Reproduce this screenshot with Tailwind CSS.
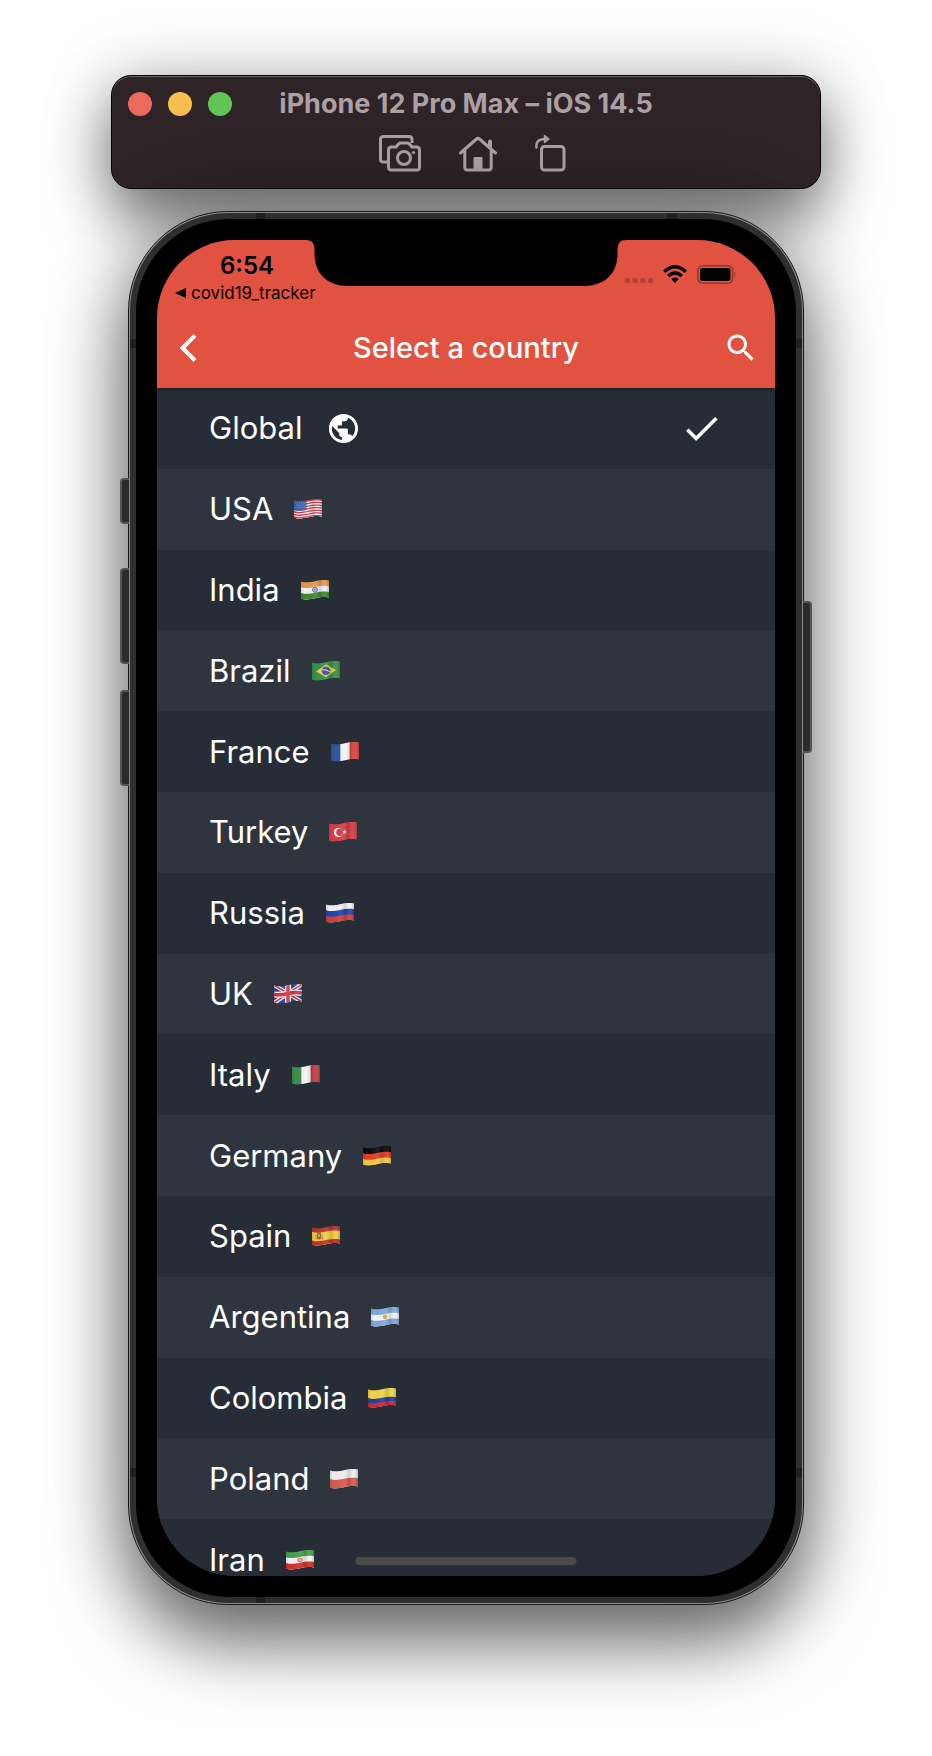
<!DOCTYPE html>
<html lang="en">
<head>
<meta charset="utf-8">
<meta name="viewport" content="width=device-width, initial-scale=1">
<title>Select a country</title>
<script src="https://cdn.jsdelivr.net/npm/@tailwindcss/browser@4"></script>
</head>
<body class="bg-white font-['Inter','Liberation_Sans',sans-serif]">
<!-- Shared flag pieces: waving outline and fabric shading -->
<svg class="absolute size-0" aria-hidden="true">
  <defs>
    <clipPath id="wave"><path d="M0 1.5c5 1.5 9 .8 14-.3s9-1.5 14-.6v17c-5-.9-9-.5-14 .6s-9 1.8-14 .5z"/></clipPath>
    <linearGradient id="shade"><stop offset="0" stop-color="#000" stop-opacity=".12"/><stop offset=".12" stop-color="#000" stop-opacity="0"/><stop offset=".5" stop-color="#fff" stop-opacity=".08"/><stop offset=".68" stop-color="#000" stop-opacity=".14"/><stop offset=".85" stop-color="#fff" stop-opacity=".06"/><stop offset="1" stop-color="#000" stop-opacity=".2"/></linearGradient>
  </defs>
</svg>
<main class="flex min-h-screen flex-col items-center gap-[22px] overflow-hidden px-4 pt-[75px] pb-[150px]">
  <header class="flex w-full max-w-[710px] flex-col rounded-[20px] border border-black bg-[#2e2327] px-4 pt-3 pb-4 shadow-[inset_0_1px_0_#6b6366,0_30px_60px_rgba(0,0,0,0.5),0_0_70px_rgba(0,0,0,0.2)]">
    <div class="grid grid-cols-[1fr_auto_1fr] items-center">
      <div class="flex gap-4">
        <button aria-label="Close" class="size-6 rounded-full bg-[#ed6a5f]"></button>
        <button aria-label="Minimize" class="size-6 rounded-full bg-[#f5be4f]"></button>
        <button aria-label="Zoom" class="size-6 rounded-full bg-[#61c454]"></button>
      </div>
      <h1 class="text-[27px] leading-8 font-bold whitespace-nowrap text-[#aca0a4]">iPhone 12 Pro Max – iOS 14.5</h1>
    </div>
    <div class="mt-[14px] ml-[247px] flex items-center gap-[30px] text-[#aca0a4]">
      <button aria-label="Screenshot" class="ml-1"><svg width="42" height="38" viewBox="0 0 42 38" fill="none" stroke="currentColor" stroke-width="3" stroke-linejoin="round"><path d="M8 28H4.500Q1.500 28 1.500 25V5.500Q1.500 2.500 4.500 2.500H30Q33 2.500 33 5.500V9"/><path d="M12.500 13H17l2.500-3Q20.500 9 22 9h6Q29.500 9 30.500 10L33 13h4.500Q40.500 13 40.500 16v17Q40.500 36 38 36H12.500Q9.500 36 9.500 33V16Q9.500 13 12.500 13Z"/><circle cx="25" cy="24" r="6.500"/><circle cx="34.500" cy="18.500" r="1.600" fill="currentColor" stroke="none"/></svg></button>
      <button aria-label="Home" class="ml-2"><svg width="38" height="38" viewBox="0 0 38 38" fill="none" stroke="currentColor" stroke-width="3" stroke-linecap="round" stroke-linejoin="round"><path d="M1.500 19L17.500 5Q19 3.800 20.500 5L36.500 19M5.800 17V33Q5.800 36 8.500 36h21Q32.200 36 32.200 33V17"/><path d="M31 13V7.500" stroke-width="4"/><path d="M15 35V23.500h8V35z" fill="currentColor" stroke-width="1"/></svg></button>
      <button aria-label="Rotate" class="ml-2"><svg width="31" height="38" viewBox="0 0 31 38" fill="none" stroke="currentColor" stroke-width="3" stroke-linecap="round"><rect x="6.500" y="12.500" width="22.500" height="23.500" rx="3"/><path d="M1.500 13.500Q.5 5 9.500 5" stroke-width="2.500"/><path d="M9.500 1.500v7l4.500-3.500z" fill="currentColor" stroke-width="1.500" stroke-linejoin="round"/></svg></button>
    </div>
  </header>

  <section class="relative w-full max-w-[676px] rounded-[100px] border border-[#161616] bg-[#8c8c8c] p-px shadow-[0_40px_70px_rgba(0,0,0,0.5),0_0_80px_rgba(0,0,0,0.3)]">
    <!-- Hardware buttons -->
    <div class="absolute top-[266px] -left-[9px] h-[46px] w-[9px] rounded-l-[4px] border-2 border-r-0 border-[#555] bg-[#2b2b2b]"></div>
    <div class="absolute top-[356px] -left-[9px] h-[96px] w-[9px] rounded-l-[4px] border-2 border-r-0 border-[#555] bg-[#2b2b2b]"></div>
    <div class="absolute top-[478px] -left-[9px] h-[96px] w-[9px] rounded-l-[4px] border-2 border-r-0 border-[#555] bg-[#2b2b2b]"></div>
    <div class="absolute top-[389px] -right-[9px] h-[152px] w-[9px] rounded-r-[4px] border-2 border-l-0 border-[#555] bg-[#2b2b2b]"></div>
    <div class="relative overflow-hidden rounded-[98px] bg-[#2f2f2f] p-[6px]">
      <!-- Antenna bands -->
      <div class="absolute inset-y-0 left-[126px] w-[9px] bg-[#1f1f1f]"></div>
      <div class="absolute top-0 right-[125px] h-3 w-[10px] bg-[#1f1f1f]"></div>
      <div class="absolute inset-x-0 top-[126px] h-[9px] bg-[#1f1f1f]"></div>
      <div class="absolute inset-x-0 bottom-[126px] h-[9px] bg-[#1f1f1f]"></div>
      <div class="relative rounded-[93px] bg-black p-[21px]">
        <div class="relative flex aspect-[618/1336] flex-col overflow-hidden rounded-[78px] bg-[#262d36]">
          <svg class="absolute top-0 left-1/2 z-10 -translate-x-1/2" width="320" height="47" viewBox="0 0 320 47"><path d="M0 0Q8.500 0 8.500 9V14C8.500 34 22 46 42 46H278C298 46 311.500 34 311.500 14V9Q311.500 0 320 0Z"/></svg>
          <div class="relative z-[1] shrink-0 bg-[#e15241] shadow-[0_1px_4px_rgba(0,0,0,0.35)]">
            <div class="flex h-[68px] justify-between pr-[39px] pl-[18px] text-black">
              <div class="pt-3">
                <div class="pl-[45px] text-[24px] leading-7 font-semibold">6:54</div>
                <a href="#" class="flex items-center gap-[5px] text-[17px] leading-[26px]"><svg width="11" height="10" viewBox="0 0 11 10"><path d="M0 5L11 0V10Z"/></svg>covid19_tracker</a>
              </div>
              <div class="flex items-start gap-[10px] pt-[25px]">
                <svg class="mt-[13px]" width="28" height="6" viewBox="0 0 28 6" fill="#b04236"><rect width="5" height="5" rx="1.500"/><rect x="7.700" width="5" height="5" rx="1.500"/><rect x="15.300" width="5" height="5" rx="1.500"/><rect x="23" width="5" height="5" rx="1.500"/></svg>
                <svg width="24" height="19" viewBox="0 0 24 19" fill="none" stroke="#000" stroke-width="3.400"><path d="M1.300 6.800Q12-3.200 22.700 6.800"/><path d="M5.200 11Q12 4.800 18.800 11"/><path d="M8.300 14Q12 11.200 15.700 14L12 18Z" fill="#000" stroke="none"/></svg>
                <svg width="39" height="19" viewBox="0 0 39 19"><rect x=".75" y=".75" width="35" height="17.500" rx="5" fill="none" stroke="#963629" stroke-width="1.500"/><rect x="3" y="3" width="30.500" height="13" rx="2.500"/><path d="M37.500 6.500Q39.500 9.500 37.500 12.500Z" fill="#963629"/></svg>
              </div>
            </div>
            <div class="grid h-20 grid-cols-[1fr_auto_1fr] items-center px-4 text-white">
              <button aria-label="Back" class="justify-self-start px-[6px]"><svg width="18" height="30" viewBox="0 0 18 30" fill="none" stroke="currentColor" stroke-width="4"><path d="M16 2.500L3.500 15L16 27.500"/></svg></button>
              <h2 class="text-[29px] leading-9 font-medium whitespace-nowrap">Select a country</h2>
              <button aria-label="Search" class="justify-self-end"><svg width="36" height="36" viewBox="0 0 24 24" fill="currentColor"><path d="M15.500 14h-.79l-.28-.27C15.410 12.590 16 11.110 16 9.500 16 5.910 13.090 3 9.500 3S3 5.910 3 9.500 5.910 16 9.500 16c1.610 0 3.090-.59 4.230-1.570l.27.28v.79l5 4.990L20.490 19l-4.990-5zm-6 0C7.010 14 5 11.990 5 9.500S7.010 5 9.500 5 14 7.010 14 9.500 11.990 14 9.500 14z"/></svg></button>
            </div>
          </div>
          <ul id="countries" class="grid h-[1212px] shrink-0 auto-rows-fr text-[31px] leading-10 text-white"></ul>
          <div class="absolute bottom-[11px] left-1/2 h-2 w-[221px] -translate-x-1/2 rounded-full bg-[#4b4a4b]"></div>
        </div>
      </div>
    </div>
  </section>
</main>
<script>
// A horizontal band starts at y and runs to the bottom edge, following the wave.
const band = (y, c) => `<path d="M0 ${y}c5 1.500 9 .8 14-.3s9-1.500 14-.6V22H0z" fill="${c}"/>`;
const bands = (...cs) => cs.map((c, i) => i ? band(1.5 + i * 17.2 / cs.length, c) : `<path d="M0 0h28v22H0z" fill="${c}"/>`).join('');
const columns = (...cs) => cs.map((c, i) => `<path d="M${i * 28 / 3} 0h10v22h-10z" fill="${c}"/>`).join('');
const flags = {
  USA: Array.from({length: 13}, (_, i) => band(i ? 1.5 + i * 1.32 : -2, i % 2 ? '#f4eeee' : '#c8394a')).join('') + '<path d="M0 0h12.500v11Q6 12.500 0 11.300z" fill="#3d62a5"/><path d="M1.500 4h10M2 6.200h10M1.500 8.400h10" stroke="#a9bbdb" stroke-width=".7" stroke-dasharray=".8 1"/>',
  India: bands('#e8984f', '#f2f1f1', '#3d8a2e') + '<circle cx="14" cy="9.800" r="2.500" fill="#b9bde0" stroke="#4b50a8" stroke-width=".8"/><circle cx="14" cy="9.800" r=".8" fill="#3d3f99"/>',
  Brazil: bands('#3a9149') + '<path d="M4 10.500L14 3.500L24 9L14 16z" fill="#f0d048"/><circle cx="14" cy="9.800" r="4.300" fill="#3c4c9b"/><path d="M10 8.800q4-.6 8 2" stroke="#dfe5f2" fill="none"/>',
  France: columns('#3159a0', '#f5f5f5', '#d8473e'),
  Turkey: bands('#d63e45') + '<circle cx="9.500" cy="10.500" r="4.600" fill="#fff"/><circle cx="10.900" cy="10.300" r="3.700" fill="#d63e45"/><path d="M15.500 7.500l.6 1.600 1.700-.1-1.300 1.100.5 1.700-1.500-.9-1.400 1 .5-1.700-1.400-1 1.700-.1z" fill="#fff"/>',
  Russia: bands('#f4f2f3', '#2144ae', '#d33f37'),
  UK: bands('#2f4d99') + '<path d="M0 1l28 17M28 0L0 19" stroke="#f2eeee" stroke-width="4"/><path d="M0 1l28 17M28 0L0 19" stroke="#d0384a" stroke-width="1.500"/><path d="M14 0v22M0 10.500q7 .8 14-1t14-.5" stroke="#f2eeee" stroke-width="6" fill="none"/><path d="M14 0v22M0 10.500q7 .8 14-1t14-.5" stroke="#d0384a" stroke-width="3.400" fill="none"/>',
  Italy: columns('#3c8f4f', '#f5f5f5', '#c0403f'),
  Germany: bands('#0c0a0a', '#e53b27', '#f3cb43'),
  Spain: bands('#b8352f', '#f0cc45', '#f0cc45', '#b8352f') + '<path d="M5 8q0-2 2-2t2 2v4q0 1.500-2 1.500T5 12z" fill="#a8622f"/><path d="M4 8v5.500M10.200 8v5.500" stroke="#9b7a50" stroke-width=".8"/><path d="M6 8.500h2v2H6z" fill="#c9b4a0"/>',
  Argentina: bands('#7fa9dc', '#f4f3f3', '#7fa9dc') + '<circle cx="14" cy="9.800" r="2.200" fill="#dba148"/>',
  Colombia: bands('#f1d345', '#f1d345', '#223f9f', '#c22c38'),
  Poland: bands('#efeeee', '#d85a4e'),
  Iran: bands('#4a9f4d', '#f4f3f3', '#cf3428') + '<path d="M12.300 8q-1.200 2.300.8 4M15.700 8q1.200 2.300-.8 4M14 7.500v5" stroke="#cf3428" fill="none" stroke-width=".9"/>'
};
const globe = '<svg class="ml-6" width="35" height="35" viewBox="0 0 24 24" fill="currentColor" aria-hidden="true"><path d="M12 2C6.480 2 2 6.480 2 12s4.480 10 10 10 10-4.480 10-10S17.520 2 12 2zm-1 17.930c-3.950-.49-7-3.850-7-7.930 0-.62.080-1.210.210-1.790L9 15v1c0 1.100.9 2 2 2v1.930zm6.900-2.540c-.26-.81-1-1.390-1.900-1.390h-1v-3c0-.55-.45-1-1-1H8v-2h2c.55 0 1-.45 1-1V7h2c1.100 0 2-.9 2-2v-.41c2.930 1.190 5 4.060 5 7.410 0 2.080-.8 3.970-2.100 5.390z"/></svg>';
const check = '<svg class="ml-auto" width="43" height="43" viewBox="0 0 24 24" fill="currentColor" aria-label="Selected"><path d="M9 16.170L4.830 12l-1.420 1.410L9 19 21 7l-1.410-1.410z"/></svg>';
const flag = art => `<svg class="ml-[21px]" width="28" height="20" viewBox="0 0 28 20" aria-hidden="true"><g clip-path="url(#wave)">${art}<path d="M0 0h28v20H0z" fill="url(#shade)"/></g></svg>`;
const row = (name, extra) => `<li class="odd:bg-[#262d36] even:bg-[#2f353f]"><button class="flex size-full items-center px-[52px] text-left"><span>${name}</span>${extra}</button></li>`;
document.getElementById('countries').innerHTML = row('Global', globe + check) + Object.entries(flags).map(([n, a]) => row(n, flag(a))).join('');
</script>
</body>
</html>
